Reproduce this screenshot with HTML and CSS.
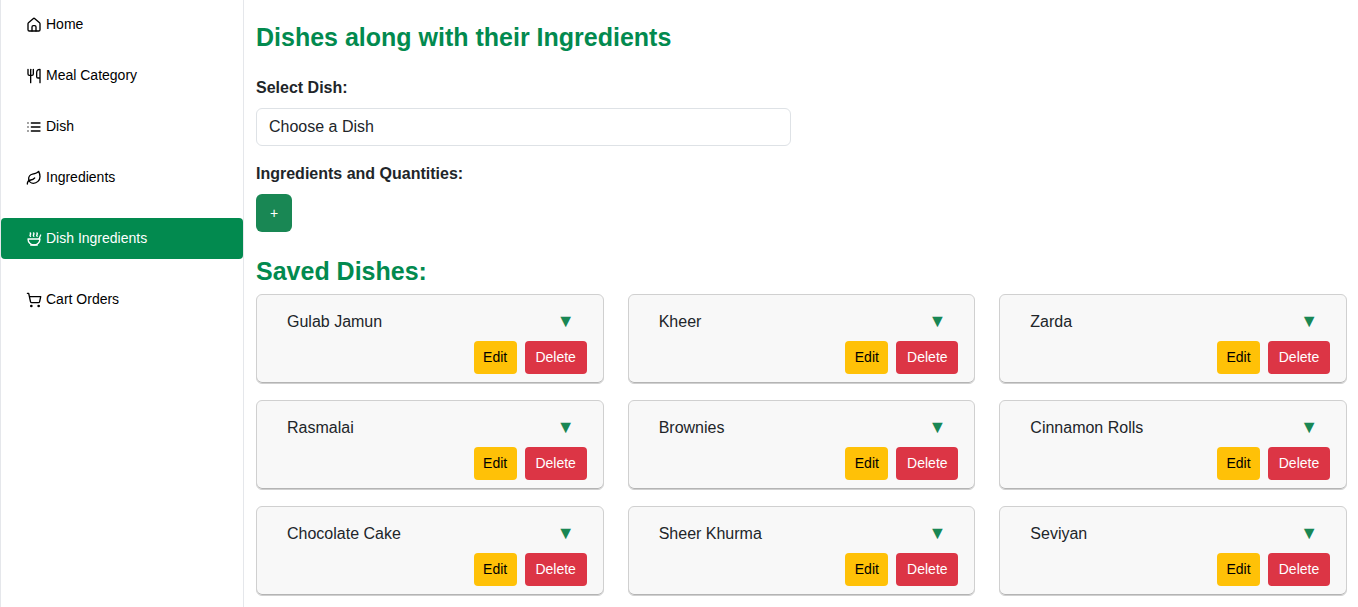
FILE: index.html
```html
<!DOCTYPE html>
<html lang="en">
<head>
<meta charset="utf-8">
<title>Dish Ingredients</title>
<link rel="stylesheet" href="styles.css">
</head>
<body>
<div class="layout">
  <nav class="sidebar">
    <a class="nav-link" href="#"><svg class="icon" viewBox="0 0 24 24"><path d="M15 21v-6a2 2 0 0 0-2-2h-2a2 2 0 0 0-2 2v6"/><path d="M3 10a2 2 0 0 1 .709-1.528l7-5.999a2 2 0 0 1 2.582 0l7 5.999A2 2 0 0 1 21 10v9a2 2 0 0 1-2 2H5a2 2 0 0 1-2-2z"/></svg>Home</a>
    <a class="nav-link" href="#"><svg class="icon" viewBox="0 0 24 24"><path d="M3 2v7c0 1.1.9 2 2 2h4a2 2 0 0 0 2-2V2"/><path d="M7 2v20"/><path d="M21 15V2a5 5 0 0 0-5 5v6c0 1.1.9 2 2 2h3Zm0 0v7"/></svg>Meal Category</a>
    <a class="nav-link" href="#"><svg class="icon" viewBox="0 0 24 24"><path d="M8 6h13M8 12h13M8 18h13M3 6h.01M3 12h.01M3 18h.01"/></svg>Dish</a>
    <a class="nav-link" href="#"><svg class="icon" viewBox="0 0 24 24"><path d="M11 20A7 7 0 0 1 9.8 6.1C15.5 5 17 4.48 19 2c1 2 2 4.18 2 8 0 5.5-4.78 10-10 10Z"/><path d="M2 21c0-3 1.85-5.36 5.08-6C9.5 14.52 12 13 13 12"/></svg>Ingredients</a>
    <a class="nav-link active" href="#" aria-current="page"><svg class="icon" viewBox="0 0 24 24"><path d="M12 21a9 9 0 0 0 9-9H3a9 9 0 0 0 9 9Z"/><path d="M7 21h10"/><path d="M19.5 12 22 6"/><path d="M16.25 3c.27.1.8.53.75 1.36-.06.83-.93 1.2-1 2.02-.05.78.34 1.24.73 1.62"/><path d="M11.25 3c.27.1.8.53.74 1.36-.05.83-.93 1.2-.98 2.02-.06.78.33 1.24.72 1.62"/><path d="M6.25 3c.27.1.8.53.75 1.36-.06.83-.93 1.2-1 2.02-.05.78.34 1.24.74 1.62"/></svg>Dish Ingredients</a>
    <a class="nav-link" href="#"><svg class="icon" viewBox="0 0 24 24"><circle cx="8" cy="21" r="1"/><circle cx="19" cy="21" r="1"/><path d="M2.05 2.05h2l2.66 12.42a2 2 0 0 0 2 1.58h9.78a2 2 0 0 0 1.95-1.57l1.65-7.43H5.12"/></svg>Cart Orders</a>
  </nav>
  <main class="content">
    <h1 class="title">Dishes along with their Ingredients</h1>
    <form class="dish-form">
      <label class="label" for="dish">Select Dish:</label>
      <select class="select" id="dish"><option>Choose a Dish</option></select>
      <span class="label" id="quantities">Ingredients and Quantities:</span>
      <button class="btn btn-add" type="button" aria-describedby="quantities">+</button>
    </form>
    <h2 class="title">Saved Dishes:</h2>
    <div class="cards">
      <article class="card"><div class="card-head"><span>Gulab Jamun</span><span class="arrow">▼</span></div><div class="actions"><button class="btn btn-edit">Edit</button><button class="btn btn-delete">Delete</button></div></article>
      <article class="card"><div class="card-head"><span>Kheer</span><span class="arrow">▼</span></div><div class="actions"><button class="btn btn-edit">Edit</button><button class="btn btn-delete">Delete</button></div></article>
      <article class="card"><div class="card-head"><span>Zarda</span><span class="arrow">▼</span></div><div class="actions"><button class="btn btn-edit">Edit</button><button class="btn btn-delete">Delete</button></div></article>
      <article class="card"><div class="card-head"><span>Rasmalai</span><span class="arrow">▼</span></div><div class="actions"><button class="btn btn-edit">Edit</button><button class="btn btn-delete">Delete</button></div></article>
      <article class="card"><div class="card-head"><span>Brownies</span><span class="arrow">▼</span></div><div class="actions"><button class="btn btn-edit">Edit</button><button class="btn btn-delete">Delete</button></div></article>
      <article class="card"><div class="card-head"><span>Cinnamon Rolls</span><span class="arrow">▼</span></div><div class="actions"><button class="btn btn-edit">Edit</button><button class="btn btn-delete">Delete</button></div></article>
      <article class="card"><div class="card-head"><span>Chocolate Cake</span><span class="arrow">▼</span></div><div class="actions"><button class="btn btn-edit">Edit</button><button class="btn btn-delete">Delete</button></div></article>
      <article class="card"><div class="card-head"><span>Sheer Khurma</span><span class="arrow">▼</span></div><div class="actions"><button class="btn btn-edit">Edit</button><button class="btn btn-delete">Delete</button></div></article>
      <article class="card"><div class="card-head"><span>Seviyan</span><span class="arrow">▼</span></div><div class="actions"><button class="btn btn-edit">Edit</button><button class="btn btn-delete">Delete</button></div></article>
    </div>
  </main>
</div>
</body>
</html>
```
FILE: styles.css
```css
* { box-sizing: border-box; }

body {
  margin: 0;
  font-family: "Liberation Sans", Arial, sans-serif;
  font-size: 16px;
  line-height: 24px;
  color: #212529;
  background: #fff;
}

.layout {
  display: grid;
  grid-template-columns: 244px 1fr;
  min-height: 100vh;
}

.sidebar {
  display: flex;
  flex-direction: column;
  gap: 10px;
  padding-top: 4px;
  border: solid #e5e7eb;
  border-width: 0 1px;
}

.nav-link {
  display: flex;
  align-items: flex-start;
  gap: 4px;
  padding: 10px 25px;
  font-size: 14px;
  line-height: 21px;
  color: #000;
  text-decoration: none;
  border-radius: 4px;
}

.nav-link.active {
  margin: 10px 0;
  color: #fff;
  background: #028a4f;
}

.icon {
  width: 16px;
  height: 16px;
  margin-top: 3px;
  fill: none;
  stroke: currentColor;
  stroke-width: 2;
  stroke-linecap: round;
  stroke-linejoin: round;
}

.content { padding: 22px 11px 11px 12px; }

.title {
  margin: 0 0 8px;
  font-size: 25px;
  line-height: 30px;
  font-weight: 700;
  color: #028a4f;
}

.dish-form {
  display: flex;
  flex-direction: column;
  align-items: flex-start;
  margin: 24px 0;
}

.label {
  margin-bottom: 8px;
  font-weight: 700;
}

.select {
  width: 49%;
  height: 38px;
  margin-bottom: 16px;
  padding: 6px 12px;
  font: inherit;
  color: inherit;
  background: #fff;
  border: 1px solid #dee2e6;
  border-radius: 6px;
  appearance: none;
}

.btn {
  padding: 6px 9px;
  font-family: inherit;
  font-size: 14px;
  line-height: 21px;
  color: #fff;
  border: 0;
  border-radius: 4px;
}

.btn-add {
  min-width: 36px;
  height: 38px;
  background: #198754;
  border-radius: 6px;
}

.btn-edit {
  min-width: 43px;
  color: #000;
  background: #ffc107;
}

.btn-delete {
  min-width: 62px;
  background: #dc3545;
}

.cards {
  display: grid;
  grid-template-columns: repeat(3, 1fr);
  gap: 16px 24px;
}

.card {
  padding: 15px 16px 9px;
  background: #f8f8f8;
  border: 1px solid #d0d0d0;
  border-radius: 6px;
  box-shadow: inset 0 -1px 0 #b4b4b4;
}

.card-head {
  display: flex;
  justify-content: space-between;
  padding: 0 12px 0 14px;
}

.arrow {
  font-size: 18px;
  line-height: 22px;
  color: #198754;
}

.actions {
  display: flex;
  justify-content: flex-end;
  gap: 8px;
  margin-top: 7px;
}
```
